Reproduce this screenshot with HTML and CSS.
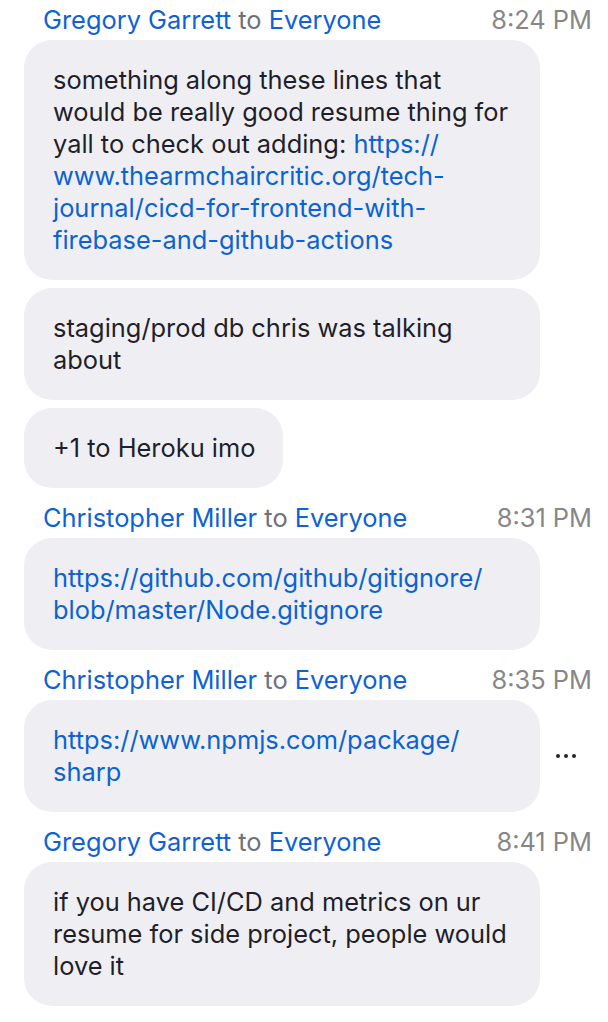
FILE: index.html
```html
<!DOCTYPE html>
<html lang="en">
<head>
<meta charset="utf-8">
<title>Chat</title>
<link rel="stylesheet" href="styles.css">
</head>
<body>
<div class="chat">
  <div class="group first">
    <div class="meta">
      <div class="who"><span class="name">Gregory Garrett</span> <span class="to">to</span> <span class="name">Everyone</span></div>
      <div class="time">8:24 PM</div>
    </div>
    <div class="row">
      <div class="bubble full">something along these lines that<br>would be really good resume thing for<br>yall to check out adding: <a class="link" href="#">https://<br>www.thearmchaircritic.org/tech-<br>journal/cicd-for-frontend-with-<br>firebase-and-github-actions</a></div>
    </div>
    <div class="row">
      <div class="bubble full">staging/prod db chris was talking<br>about</div>
    </div>
    <div class="row">
      <div class="bubble">+1 to Heroku imo</div>
    </div>
  </div>

  <div class="group">
    <div class="meta">
      <div class="who"><span class="name">Christopher Miller</span> <span class="to">to</span> <span class="name">Everyone</span></div>
      <div class="time">8:31 PM</div>
    </div>
    <div class="row">
      <div class="bubble full"><a class="link" href="#">https://github.com/github/gitignore/<br>blob/master/Node.gitignore</a></div>
    </div>
  </div>

  <div class="group">
    <div class="meta">
      <div class="who"><span class="name">Christopher Miller</span> <span class="to">to</span> <span class="name">Everyone</span></div>
      <div class="time">8:35 PM</div>
    </div>
    <div class="row">
      <div class="bubble full"><a class="link" href="#">https://www.npmjs.com/package/<br>sharp</a></div>
      <div class="more" aria-label="More"><span class="dot"></span><span class="dot"></span><span class="dot"></span></div>
    </div>
  </div>

  <div class="group">
    <div class="meta">
      <div class="who"><span class="name">Gregory Garrett</span> <span class="to">to</span> <span class="name">Everyone</span></div>
      <div class="time">8:41 PM</div>
    </div>
    <div class="row">
      <div class="bubble full">if you have CI/CD and metrics on ur<br>resume for side project, people would<br>love it</div>
    </div>
  </div>
</div>
</body>
</html>
```

FILE: styles.css
```css
* { box-sizing: border-box; }

html, body {
  margin: 0;
  padding: 0;
  background: #ffffff;
}

body {
  font-family: Inter, "Liberation Sans", Arial, sans-serif;
  color: #1f1f2b;
}

.chat {
  display: flex;
  flex-direction: column;
  gap: 15px;
  padding: 5px 16px 0 24px;
}

.group {
  display: flex;
  flex-direction: column;
  gap: 8px;
}

.meta {
  display: flex;
  justify-content: space-between;
  align-items: center;
  height: 30px;
  padding-left: 19px;
  margin-bottom: -3px;
  font-size: 25.4px;
  line-height: 30px;
}

.name { color: #0f62d3; }
.to { color: #707078; }
.time { color: #878787; }

.row {
  display: flex;
  align-items: center;
  gap: 16px;
}

.bubble {
  background: #efeff3;
  border-radius: 28px;
  padding: 24px 28px 24px 29px;
  font-size: 25.4px;
  line-height: 32px;
  white-space: nowrap;
  max-width: 516px;
}

.bubble.full { width: 516px; }

.link {
  color: #0b63d1;
  text-decoration: none;
}

.more {
  display: flex;
  gap: 4px;
  align-items: center;
  height: 4px;
  margin-top: -1px;
}

.dot {
  width: 4px;
  height: 4px;
  border-radius: 50%;
  background: #24242e;
}
```
